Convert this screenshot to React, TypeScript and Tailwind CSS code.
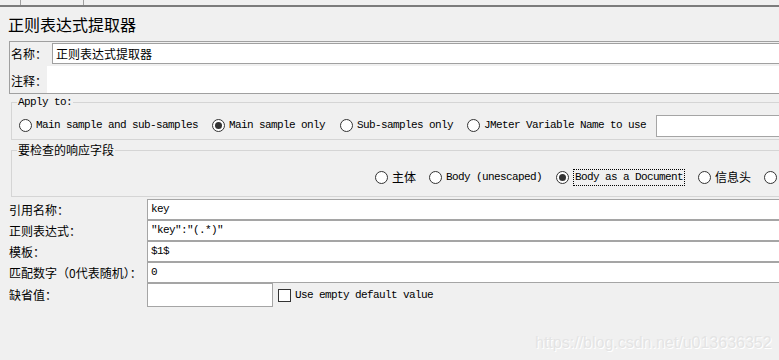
import React from "react"

const cjk = "font-['Noto_Sans_CJK_SC',sans-serif]"
const mono = "font-['Liberation_Mono',monospace] text-[11px] tracking-[-0.6px]"

type RadioProps = {
	label: string
	checked?: boolean
	cn?: boolean
	focused?: boolean
	className?: string
}

const Radio = ({ label, checked, cn, focused, className = "" }: RadioProps) => (
	<label className={`flex items-center gap-[4px] shrink-0 ${className}`}>
		<span className="w-[13px] h-[13px] rounded-full border border-[#333] bg-white flex items-center justify-center shrink-0">
			{checked && <span className="w-[7px] h-[7px] rounded-full bg-[#333]" />}
		</span>
		<span
			className={`whitespace-nowrap text-black ${
				cn ? `${cjk} text-[12px]` : mono
			} ${focused ? "border border-dotted border-black px-[1px] leading-[15px]" : ""}`}
		>
			{label}
		</span>
	</label>
)

const FieldRow = ({ label, value }: { label: string; value: string }) => (
	<div className="flex items-center">
		<div className={`w-[147px] pl-[9px] text-[12px] text-black whitespace-nowrap ${cjk}`}>
			{label}
		</div>
		<div className={`flex-1 h-[21px] border border-[#a5a5a5] bg-white flex items-center pl-[3px] text-black ${mono}`}>
			{value}
		</div>
	</div>
)

const App = () => {
	return (
		<div className="relative w-[779px] h-[360px] overflow-hidden bg-[#f0f0f0]">
			{/* tab strip */}
			<div className="h-[7px] flex border-b-2 border-[#7c7c7c]">
				<div className="w-[20px]" />
				<div className="w-[64px] border-l border-r border-[#a0a0a0]" />
			</div>

			<div className={`mt-[6px] pl-[8px] text-[16px] leading-[22px] text-black ${cjk}`}>
				正则表达式提取器
			</div>

			{/* name / comment box */}
			<div className="mt-[6px] ml-[9px] w-[800px] border border-[#a0a0a0]">
				<div className="flex items-center mt-[1px] h-[21px]">
					<div className={`w-[42px] pl-[1px] text-[12px] ${cjk}`}>名称：</div>
					<div className={`flex-1 h-[21px] border border-[#a0a0a0] bg-white flex items-center pl-[3px] text-[12px] ${cjk}`}>
						正则表达式提取器
					</div>
				</div>
				<div className="flex mt-[2px] h-[27px]">
					<div className={`w-[37px] pl-[1px] flex items-end pb-[3px] text-[12px] ${cjk}`}>注释：</div>
					<div className="flex-1 bg-white" />
				</div>
			</div>

			{/* apply to */}
			<fieldset className="ml-[11px] w-[800px] border border-[#d5d5d5] mt-[1px]">
				<legend className={`ml-[5px] px-[1px] leading-[14px] ${mono}`}>Apply to:</legend>
				<div className="flex items-center h-[23px] mt-[5px] mb-[2px] pl-[7px]">
					<Radio label="Main sample and sub-samples" />
					<Radio className="ml-[14px]" checked label="Main sample only" />
					<Radio className="ml-[15px]" label="Sub-samples only" />
					<Radio className="ml-[14px]" label="JMeter Variable Name to use" />
					<div className="ml-[10px] h-[22px] w-[200px] border border-[#a5a5a5] bg-white" />
				</div>
			</fieldset>

			{/* response field */}
			<fieldset className="ml-[11px] w-[800px] border border-[#d5d5d5] mt-[2px]">
				<legend className={`ml-[5px] px-[1px] text-[12px] leading-[16px] ${cjk}`}>要检查的响应字段</legend>
				<div className="flex items-center h-[18px] mt-[10px] mb-[10px] pl-[363px]">
					<Radio cn label="主体" />
					<Radio className="ml-[13px]" label="Body (unescaped)" />
					<Radio className="ml-[14px]" checked focused label="Body as a Document" />
					<Radio className="ml-[13px]" cn label="信息头" />
					<Radio className="ml-[13px]" label="Body" />
				</div>
			</fieldset>

			{/* fields */}
			<div className="mt-[2px] w-[800px] flex flex-col">
				<FieldRow label="引用名称：" value="key" />
				<FieldRow label="正则表达式：" value={'"key":"(.*)"'} />
				<FieldRow label="模板：" value="$1$" />
				<FieldRow label="匹配数字（0代表随机）：" value="0" />
				<div className="flex items-center">
					<div className={`w-[147px] pl-[9px] text-[12px] text-black ${cjk}`}>缺省值：</div>
					<div className="w-[126px] h-[24px] border border-[#a5a5a5] bg-white" />
					<span className="ml-[5px] w-[13px] h-[13px] border border-[#333] bg-white" />
					<span className={`ml-[4px] text-black whitespace-nowrap ${mono}`}>Use empty default value</span>
				</div>
			</div>

			<div className="absolute left-[535px] top-[331px] font-['Liberation_Sans',sans-serif] text-[16px] text-[#e4e4e4] [text-shadow:1px_1px_0_#ffffff] whitespace-nowrap">
				https://blog.csdn.net/u013636352
			</div>
		</div>
	)
}

export default App
